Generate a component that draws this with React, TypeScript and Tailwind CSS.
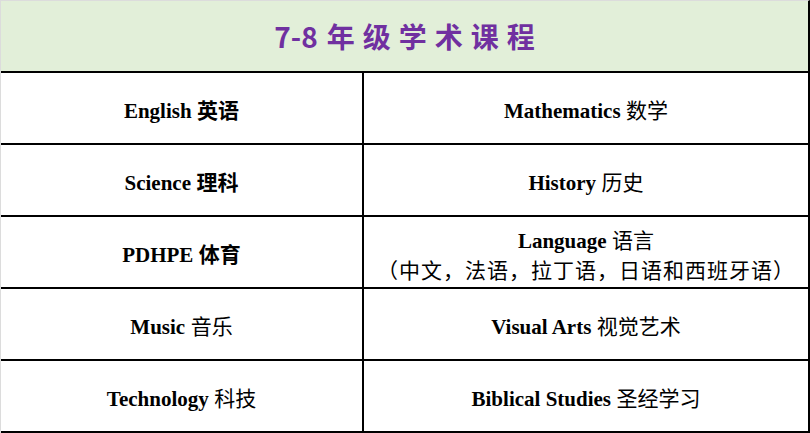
import React from "react";

const serif = "font-['Liberation_Serif','Noto_Sans_CJK_SC',serif]";

type Cell = { en: string; zh: string; zhBold?: boolean; sub?: string };

const rows: [Cell, Cell][] = [
  [{ en: "English", zh: "英语", zhBold: true }, { en: "Mathematics", zh: "数学" }],
  [{ en: "Science", zh: "理科", zhBold: true }, { en: "History", zh: "历史" }],
  [
    { en: "PDHPE", zh: "体育", zhBold: true },
    { en: "Language", zh: "语言", sub: "（中文，法语，拉丁语，日语和西班牙语）" },
  ],
  [{ en: "Music", zh: "音乐" }, { en: "Visual Arts", zh: "视觉艺术" }],
  [{ en: "Technology", zh: "科技" }, { en: "Biblical Studies", zh: "圣经学习" }],
];

function CellView({ c }: { c: Cell }) {
  return (
    <div className="flex flex-col items-center justify-center text-black text-[21px] leading-[28px] pt-[3px]">
      <div className="whitespace-nowrap">
        <span className={`${serif} font-bold`}>{c.en}</span>{" "}
        <span
          className={`font-['Noto_Sans_CJK_SC',sans-serif] ${c.zhBold ? "font-bold" : "font-normal"}`}
        >
          {c.zh}
        </span>
      </div>
      {c.sub && (
        <div className="whitespace-nowrap font-['Noto_Sans_CJK_SC',sans-serif] font-normal text-[21px] tracking-[1px]">
          {c.sub}
        </div>
      )}
    </div>
  );
}

export default function App() {
  return (
    <div className="w-[810px] h-[433px] bg-white overflow-hidden">
      <div className="w-[810px] border-l border-t border-l-[#dcdcdc] border-t-[#dcdcdc] border-r-2 border-r-black">
        <div className="h-[72px] bg-[#e2efd9] border-b-2 border-black flex items-center justify-center">
          <span className="font-['Noto_Sans_CJK_SC',sans-serif] font-bold text-[28px] text-[#7030a0] pl-[8px] whitespace-nowrap">
            <span className="tracking-[0px] mr-[9px]">7-8</span>
            <span className="tracking-[8px]">年级学术课程</span>
          </span>
        </div>
        {rows.map(([l, r], i) => (
          <div key={i} className="flex h-[72px] border-b-2 border-black">
            <div className="w-[363px] border-r-2 border-black flex items-center justify-center">
              <CellView c={l} />
            </div>
            <div className="flex-1 flex items-center justify-center">
              <CellView c={r} />
            </div>
          </div>
        ))}
      </div>
    </div>
  );
}
